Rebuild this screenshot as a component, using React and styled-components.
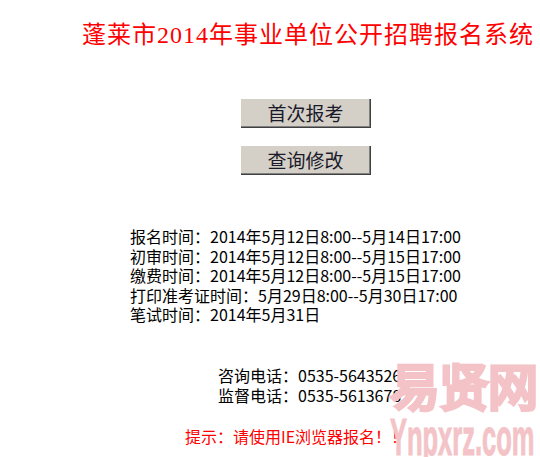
import React from "react"
import styled, { createGlobalStyle } from "styled-components"

const GlobalStyle = createGlobalStyle`
    html, body {
        margin: 0;
        padding: 0;
        background: #ffffff;
    }

    body {
        font-family: "Noto Sans CJK SC", "Liberation Sans", sans-serif;
        color: #000000;
    }
`

const Page = styled.div`
    position: relative;
    width: 540px;
    height: 457px;
    overflow: hidden;
    display: flex;
    flex-direction: column;
    align-items: flex-start;
`

const Title = styled.h1`
    margin: 0;
    padding: 20px 0 0 82px;
    height: 30px;
    line-height: 30px;
    font-family: "Liberation Serif", "Noto Sans CJK SC", serif;
    font-size: 24px;
    font-weight: 400;
    letter-spacing: 1px;
    color: #ff0000;
    white-space: nowrap;
`

const ButtonStack = styled.div`
    display: flex;
    flex-direction: column;
    gap: 17px;
    margin: 48px 0 0 240px;
`

const Button = styled.button`
    width: 131px;
    height: 30px;
    padding: 0;
    background: #d4d0c8;
    border: none;
    box-shadow:
        inset 1px 1px 0 #ffffff,
        inset -1px -1px 0 #404040,
        inset -2px -2px 0 #808080;
    font-family: "Noto Sans CJK SC", sans-serif;
    font-size: 19px;
    line-height: 30px;
    color: #1a1a2a;
`

const InfoBlock = styled.div`
    margin: ${p => p.$top}px 0 0 ${p => p.$left}px;
    font-size: 16px;
    line-height: ${p => p.$line}px;
    color: ${p => p.$color || "#000000"};
    white-space: nowrap;
`

const Line = styled.div``

const Watermark = styled.div`
    position: absolute;
    left: 390px;
    top: 352px;
    width: 148px;
    display: flex;
    flex-direction: column;
    align-items: flex-start;
    color: #f3c3c7;
    pointer-events: none;
`

const MarkTitle = styled.div`
    font-family: "Noto Sans CJK SC", sans-serif;
    font-size: 50px;
    line-height: 64px;
    letter-spacing: -1px;
    -webkit-text-stroke: 4px #f3c3c7;
    paint-order: stroke fill;
    white-space: nowrap;
`

const MarkUrl = styled.div`
    font-family: "Liberation Sans", sans-serif;
    font-size: 52px;
    font-weight: 700;
    line-height: 42px;
    white-space: nowrap;
    -webkit-text-stroke: 1px #f3c3c7;
    transform: scaleX(0.49);
    transform-origin: left center;
`

const schedule = [
    "报名时间：2014年5月12日8:00--5月14日17:00",
    "初审时间：2014年5月12日8:00--5月15日17:00",
    "缴费时间：2014年5月12日8:00--5月15日17:00",
    "打印准考证时间：5月29日8:00--5月30日17:00",
    "笔试时间：2014年5月31日",
]

const contacts = [
    "咨询电话：0535-5643526",
    "监督电话：0535-5613678",
]

export default function App() {
    return (
        <>
            <GlobalStyle />
            <Page>
                <Title>蓬莱市2014年事业单位公开招聘报名系统</Title>
                <ButtonStack>
                    <Button>首次报考</Button>
                    <Button>查询修改</Button>
                </ButtonStack>
                <InfoBlock $top={52} $left={130} $line={19.5}>
                    {schedule.map(s => <Line key={s}>{s}</Line>)}
                </InfoBlock>
                <InfoBlock $top={40} $left={218} $line={20}>
                    {contacts.map(s => <Line key={s}>{s}</Line>)}
                </InfoBlock>
                <InfoBlock $top={21} $left={185} $line={20} $color="#ff0000">
                    提示：请使用IE浏览器报名！！！
                </InfoBlock>
                <Watermark>
                    <MarkTitle>易贤网</MarkTitle>
                    <MarkUrl>Ynpxrz.com</MarkUrl>
                </Watermark>
            </Page>
        </>
    )
}
